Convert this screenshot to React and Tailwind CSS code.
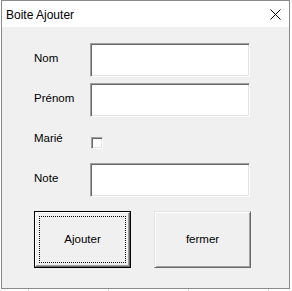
import React from "react";

const sunken =
  "bg-white border-t border-l border-t-[#a0a0a0] border-l-[#a0a0a0] border-b border-r border-b-white border-r-white shadow-[inset_1px_1px_0_#696969,inset_-1px_-1px_0_#e3e3e3]";

function Row({ label, children }) {
  return (
    <div className="flex h-[40px]">
      <div className="w-[56px] pt-[8px] text-[11.5px] leading-[14px] text-black">{label}</div>
      {children}
    </div>
  );
}

export default function App() {
  const font = { fontFamily: '"Liberation Sans", Arial, sans-serif' };
  return (
    <div className="w-[292px] h-[291px] bg-white relative overflow-hidden" style={font}>
      <div className="ml-[1px] w-[289px] h-[289px] border border-[#8a8a8a] flex flex-col">
        <div className="h-[26px] bg-white flex items-center justify-between pl-[4px] pr-[8px]">
          <span className="text-[12px] text-black pt-[1px]">Boite Ajouter</span>
          <svg width="11" height="11" viewBox="0 0 11 11" className="mt-[1px]">
            <path d="M0.5 0.5 L10.5 10.5 M10.5 0.5 L0.5 10.5" stroke="#000" strokeWidth="1" />
          </svg>
        </div>
        <div className="flex-1 bg-[#f0f0f0] pl-[32px] pt-[16px] flex flex-col">
          <Row label="Nom">
            <div className={`w-[160px] h-[34px] ${sunken}`} />
          </Row>
          <Row label="Prénom">
            <div className={`w-[160px] h-[34px] ${sunken}`} />
          </Row>
          <Row label="Marié">
            <div className={`ml-[1px] mt-[14px] w-[12px] h-[12px] ${sunken}`} />
          </Row>
          <Row label="Note">
            <div className={`w-[160px] h-[34px] ${sunken}`} />
          </Row>
          <div className="flex gap-[23px] mt-[8px]">
            <div className="w-[97px] h-[57px] border border-black">
              <div className="w-full h-full border-t border-l border-t-white border-l-white border-b border-r border-b-[#696969] border-r-[#696969] shadow-[inset_-1px_-1px_0_#a0a0a0] p-[3px]">
                <div className="w-full h-full border border-dotted border-black flex items-center justify-center text-[11.5px] text-black">
                  Ajouter
                </div>
              </div>
            </div>
            <div className="w-[97px] h-[57px] border-t border-l border-t-[#e3e3e3] border-l-[#e3e3e3] border-b border-r border-b-[#696969] border-r-[#696969] shadow-[inset_1px_1px_0_#ffffff,inset_-1px_-1px_0_#a0a0a0] flex items-center justify-center text-[11.5px] text-black">
              fermer
            </div>
          </div>
        </div>
      </div>
      <div className="flex h-[2px]">
        <div className="w-[28px]" />
        <div className="w-[1px] bg-[#d4d4d4]" />
        <div className="w-[79px]" />
        <div className="w-[1px] bg-[#d4d4d4]" />
        <div className="w-[79px]" />
        <div className="w-[1px] bg-[#d4d4d4]" />
        <div className="w-[79px]" />
        <div className="w-[1px] bg-[#d4d4d4]" />
      </div>
    </div>
  );
}
